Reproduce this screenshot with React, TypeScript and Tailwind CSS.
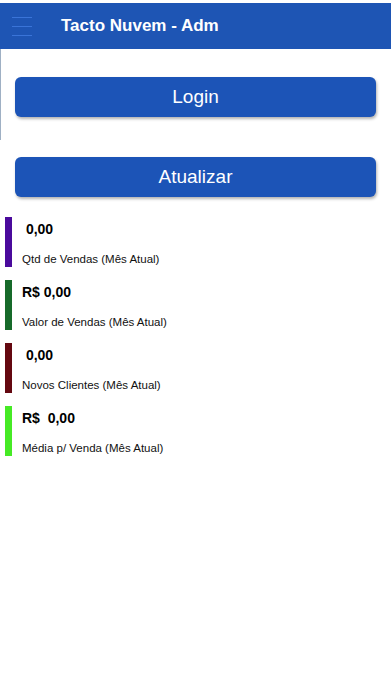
const stats = [
  { value: '\u00a00,00', label: 'Qtd de Vendas (Mês Atual)', color: 'bg-[#4a0a9c]' },
  { value: 'R$ 0,00', label: 'Valor de Vendas (Mês Atual)', color: 'bg-[#176a2a]' },
  { value: '\u00a00,00', label: 'Novos Clientes (Mês Atual)', color: 'bg-[#640810]' },
  { value: 'R$\u00a0\u00a00,00', label: 'Média p/ Venda (Mês Atual)', color: 'bg-[#46ea25]' },
];

function Hamburger() {
  return (
    <div className="flex w-[20px] flex-col gap-[8px] ml-[12px]">
      <div className="h-px bg-[#3a74d8]" />
      <div className="h-px bg-[#3a74d8]" />
      <div className="h-px bg-[#3a74d8]" />
    </div>
  );
}

export default function App() {
  return (
    <div className="min-h-[696px] bg-white pt-[3px] font-['Liberation_Sans',Arial,sans-serif]">
      <header className="flex h-[46px] items-center bg-[#1e55b4] mr-px">
        <Hamburger />
        <h1 className="ml-[29px] text-[17px] font-bold text-white">Tacto Nuvem - Adm</h1>
      </header>

      <div className="border-l border-[#9fb0c4] pt-[28px] pb-[23px] pl-[14px] pr-[16px] w-fit">
        <button className="flex h-[40px] w-[361px] items-center justify-center rounded-[6px] bg-[#1c54b7] text-[19px] text-white shadow-[1px_2px_3px_rgba(0,0,0,0.3)]">
          Login
        </button>
      </div>

      <div className="pt-[17px] pl-[15px] pr-[16px]">
        <button className="flex h-[40px] w-[361px] items-center justify-center rounded-[6px] bg-[#1c54b7] text-[19px] text-white shadow-[1px_2px_3px_rgba(0,0,0,0.3)]">
          Atualizar
        </button>
      </div>

      <main className="mt-[20px] flex flex-col gap-[13px] pl-[5px]">
        {stats.map((s) => (
          <div key={s.label} className="flex h-[50px] gap-[10px]">
            <div className={`w-[7px] ${s.color}`} />
            <div className="flex flex-col">
              <span className="mt-[4px] h-[17px] text-[14px] leading-[17px] font-bold text-black whitespace-pre">{s.value}</span>
              <span className="mt-[14px] text-[11.5px] leading-[14px] text-[#111]">{s.label}</span>
            </div>
          </div>
        ))}
      </main>
    </div>
  );
}
